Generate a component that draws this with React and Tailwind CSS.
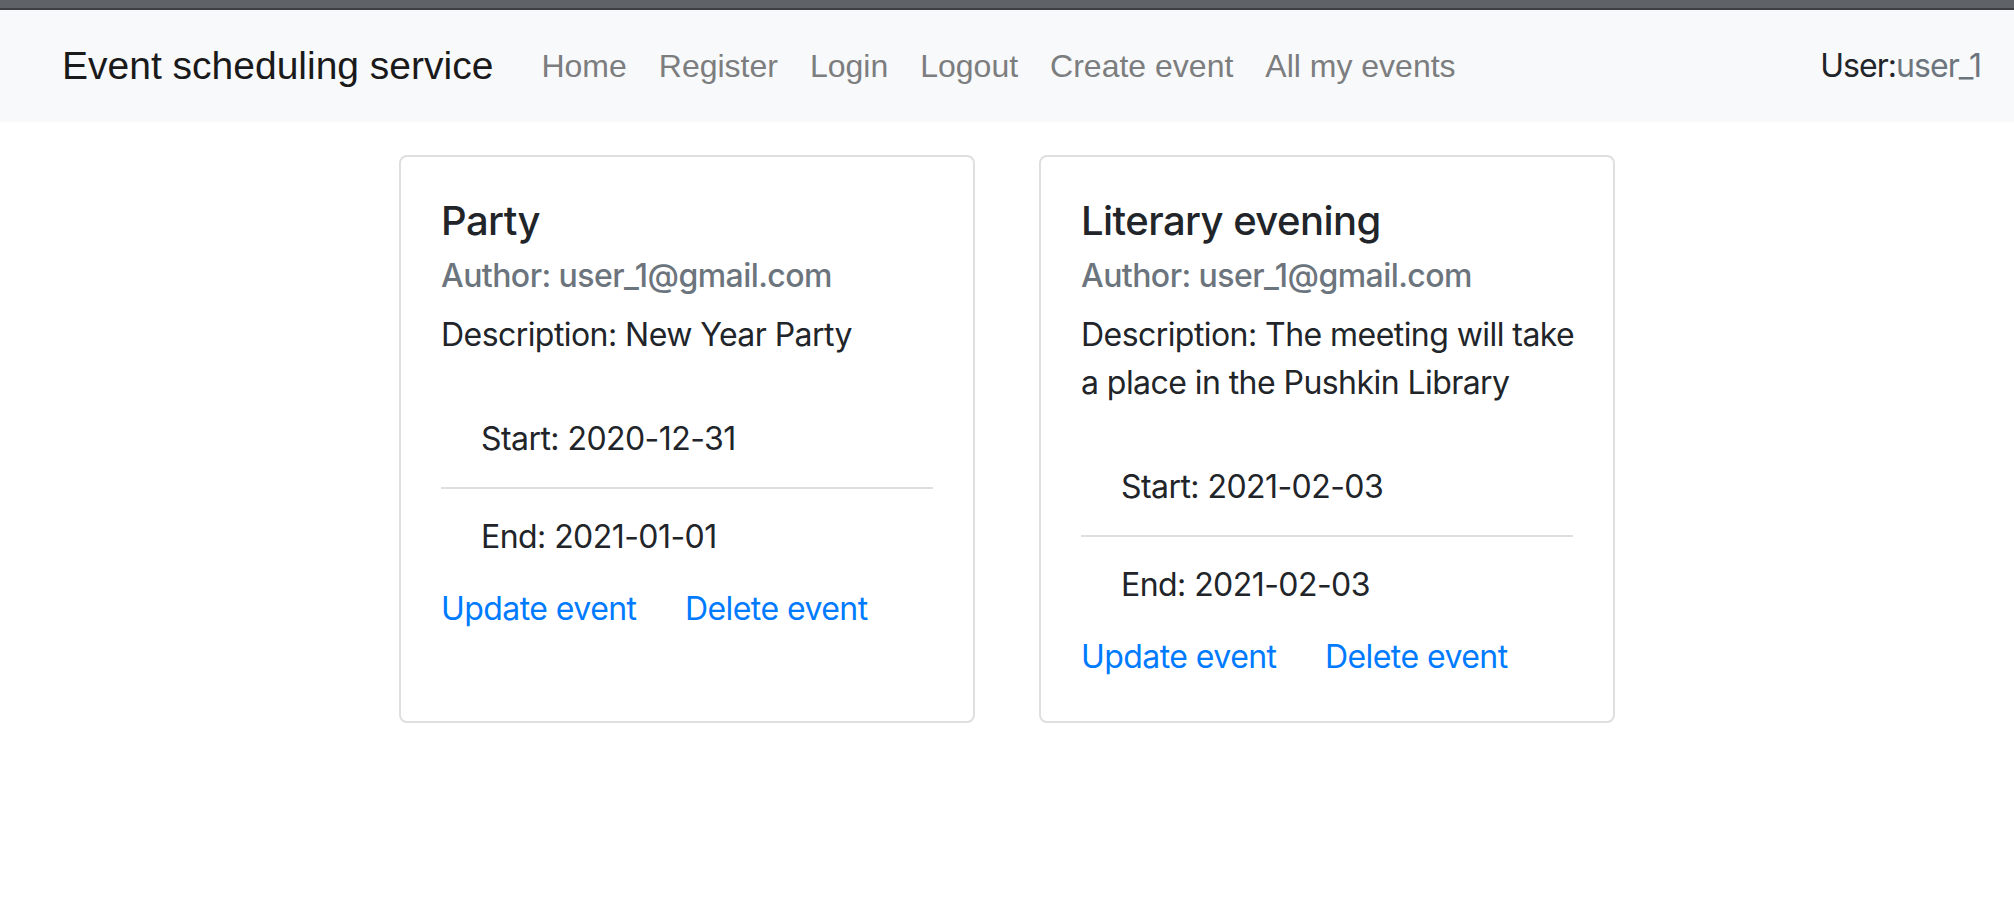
const NAV_LINKS = ['Home', 'Register', 'Login', 'Logout', 'Create event', 'All my events']

const EVENTS = [
  {
    id: 1,
    title: 'Party',
    author: 'user_1@gmail.com',
    description: 'New Year Party',
    start: '2020-12-31',
    end: '2021-01-01',
  },
  {
    id: 2,
    title: 'Literary evening',
    author: 'user_1@gmail.com',
    description: 'The meeting will take a place in the Pushkin Library',
    start: '2021-02-03',
    end: '2021-02-03',
  },
]

const sans = "font-['Inter','Liberation_Sans',sans-serif]"

function Navbar() {
  return (
    <nav className="flex items-center h-[112px] bg-[#f8f9fa] pl-[62px] pr-[33px]">
      <a className="font-['Liberation_Sans',Arial,sans-serif] text-[39px] leading-[60px] text-[#1a1a1a] mr-[32px]">
        Event scheduling service
      </a>
      <ul className="flex font-['Liberation_Sans',Arial,sans-serif] text-[32px] leading-[48px] text-[#7c7d7e]">
        {NAV_LINKS.map((label) => (
          <li key={label}>
            <a className="block px-[16px] py-[16px]">{label}</a>
          </li>
        ))}
      </ul>
      <div className={`ml-auto ${sans} text-[32px] leading-[48px] tracking-[-0.03em]`}>
        <span className="text-[#212529]">User:</span>
        <span className="text-[#6c757d]">user_1</span>
      </div>
    </nav>
  )
}

function EventCard({ event }) {
  return (
    <div className="w-[576px] mx-[32px] border-2 border-[#dfdfdf] rounded-[8px] bg-white">
      <div className={`p-[40px] ${sans} tracking-[-0.035em] text-[#212529]`}>
        <h5 className="text-[40px] leading-[48px] font-medium mb-[24px]">{event.title}</h5>
        <h6 className="text-[32px] leading-[38px] font-medium text-[#6c757d] -mt-[12px] mb-[16px]">
          Author: {event.author}
        </h6>
        <p className="text-[32px] leading-[48px] mb-[32px] -mr-[16px]">
          Description: {event.description}
        </p>
        <ul className="text-[32px] leading-[48px]">
          <li className="px-[40px] py-[24px] border-b-2 border-[#dfdfdf]">Start: {event.start}</li>
          <li className="px-[40px] py-[24px]">End: {event.end}</li>
        </ul>
        <div className="text-[32px] leading-[48px] text-[#007bff]">
          <a>Update event</a>{' '}
          <a className="ml-[40px]">Delete event</a>
        </div>
      </div>
    </div>
  )
}

export default function App() {
  return (
    <div className="min-h-[900px] bg-white">
      <div className="h-[10px] bg-[#5f6368] border-b-2 border-[#3c4043]" />
      <Navbar />
      <div className="flex justify-center mt-[33px]">
        {EVENTS.map((event) => (
          <EventCard key={event.id} event={event} />
        ))}
      </div>
    </div>
  )
}
